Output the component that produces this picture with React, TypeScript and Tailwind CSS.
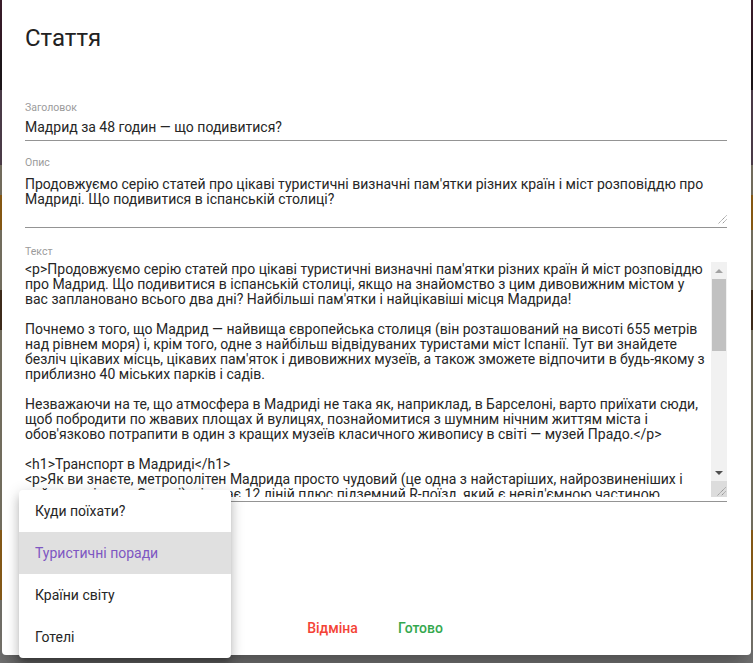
import React from 'react'

const bodyLines = [
  "<p>Продовжуємо серію статей про цікаві туристичні визначні пам'ятки різних країн й міст розповіддю",
  "про Мадрид. Що подивитися в іспанській столиці, якщо на знайомство з цим дивовижним містом у",
  "вас заплановано всього два дні? Найбільші пам'ятки і найцікавіші місця Мадрида!",
  '',
  'Почнемо з того, що Мадрид — найвища європейська столиця (він розташований на висоті 655 метрів',
  'над рівнем моря) і, крім того, одне з найбільш відвідуваних туристами міст Іспанії. Тут ви знайдете',
  "безліч цікавих місць, цікавих пам'яток і дивовижних музеїв, а також зможете відпочити в будь-якому з",
  'приблизно 40 міських парків і садів.',
  '',
  'Незважаючи на те, що атмосфера в Мадриді не така як, наприклад, в Барселоні, варто приїхати сюди,',
  'щоб побродити по жвавих площах й вулицях, познайомитися з шумним нічним життям міста і',
  "обов'язково потрапити в один з кращих музеїв класичного живопису в світі — музей Прадо.</p>",
  '',
  '<h1>Транспорт в Мадриді</h1>',
  '<p>Як ви знаєте, метрополітен Мадрида просто чудовий (це одна з найстаріших, найрозвиненіших і',
  "найсучасніших у Європі), він має 12 ліній плюс підземний R-поїзд, який є невід'ємною частиною",
]

const categories = ['Куди поїхати?', 'Туристичні поради', 'Країни світу', 'Готелі']

function ResizeGrip() {
  return (
    <svg width="10" height="10" viewBox="0 0 10 10" className="text-[#8a8a8a]">
      <path d="M9.5 1.5 L1.5 9.5 M9.5 5.5 L5.5 9.5" stroke="currentColor" strokeWidth="1" strokeDasharray="1.2 0.6" />
    </svg>
  )
}

function Scrollbar() {
  return (
    <div className="flex w-[16px] flex-col bg-[#f1f1f1]">
      <div className="flex h-[17px] items-center justify-center">
        <svg width="8" height="4" viewBox="0 0 8 4">
          <path d="M0 4 L4 0 L8 4 Z" fill="#a3a3a3" />
        </svg>
      </div>
      <div className="mx-[1px] h-[72px] bg-[#c1c1c1]" />
      <div className="flex-1" />
      <div className="flex h-[17px] items-center justify-center">
        <svg width="8" height="4" viewBox="0 0 8 4">
          <path d="M0 0 L8 0 L4 4 Z" fill="#505050" />
        </svg>
      </div>
      <div className="flex h-[16px] items-end justify-end bg-[#dcdcdc] pb-[1px] pr-[1px]">
        <ResizeGrip />
      </div>
    </div>
  )
}

function Label({ children }: { children: React.ReactNode }) {
  return <div className="text-[10.5px] leading-[12px] text-[#9b9b9b]">{children}</div>
}

export default function App() {
  return (
    <div className="relative h-[663px] w-[753px] overflow-hidden font-['Roboto',sans-serif]">
      {/* page under the backdrop */}
      <div className="flex h-full flex-col">
        <div className="h-[50px] bg-[#3d1f2d]" />
        <div className="h-[40px] bg-[#231a20]" />
        <div className="h-[75px] bg-[#5b4756]" />
        <div className="h-[30px] bg-[#8a8270]" />
        <div className="h-[35px] bg-[#a16a18]" />
        <div className="h-[60px] bg-[#8a8471]" />
        <div className="h-[40px] bg-[#4b3622]" />
        <div className="h-[200px] bg-[#8a8471]" />
        <div className="h-[70px] bg-[#9e6a1c]" />
        <div className="h-[50px] bg-[#87847b]" />
        <div className="flex-1 bg-[#7d7d7d]" />
      </div>

      {/* dialog */}
      <div className="absolute left-[2px] right-[2px] top-0 flex h-[655px] flex-col rounded-b bg-white shadow-[0_11px_15px_-7px_rgba(0,0,0,0.2),0_24px_38px_3px_rgba(0,0,0,0.14),0_9px_46px_8px_rgba(0,0,0,0.12)]">
        <h2 className="px-[23px] pt-[22px] text-[24px] font-normal leading-[32px] text-[#222]">Стаття</h2>

        <div className="flex flex-col pl-[23px] pr-[24px] text-[14px] leading-[15px] text-[#262626]">
          <div className="mt-[48px] border-b border-[#949494] pb-[5px]">
            <Label>Заголовок</Label>
            <div className="mt-[6px]">Мадрид за 48 годин — що подивитися?</div>
          </div>

          <div className="mt-[16px] border-b border-[#949494] pb-[5px]">
            <Label>Опис</Label>
            <div className="relative mt-[8px] h-[45px] whitespace-pre">
              {'Продовжуємо серію статей про цікаві туристичні визначні пам\'ятки різних країн і міст розповіддю про\nМадриді. Що подивитися в іспанській столиці?'}
              <div className="absolute bottom-[-2px] right-0">
                <ResizeGrip />
              </div>
            </div>
          </div>

          <div className="mt-[18px] border-b border-[#949494] pb-[4px]">
            <Label>Текст</Label>
            <div className="mt-[4px] flex h-[235px]">
              <div className="flex-1 overflow-hidden whitespace-pre">
                {bodyLines.map((line, i) => (
                  <div key={i} className="h-[15px]">
                    {line}
                  </div>
                ))}
              </div>
              <Scrollbar />
            </div>
          </div>
        </div>

        <div className="flex-1" />
        <div className="flex justify-center pb-[9px]">
          <button className="h-[36px] min-w-[88px] rounded text-[14px] font-medium text-[#f44336]">Відміна</button>
          <button className="h-[36px] min-w-[88px] rounded text-[14px] font-medium text-[#35a84e]">Готово</button>
        </div>
      </div>

      {/* category menu */}
      <ul className="absolute left-[19px] top-[490px] w-[212px] overflow-hidden rounded bg-white shadow-[0_5px_5px_-3px_rgba(0,0,0,0.2),0_8px_10px_1px_rgba(0,0,0,0.14),0_3px_14px_2px_rgba(0,0,0,0.12)]">
        {categories.map(c => (
          <li
            key={c}
            className={
              c === 'Туристичні поради'
                ? 'flex h-[42px] items-center bg-[#e0e0e0] pl-[16px] text-[14px] text-[#7e57c2]'
                : 'flex h-[42px] items-center pl-[16px] text-[14px] text-[#262626]'
            }
          >
            {c}
          </li>
        ))}
      </ul>
    </div>
  )
}
